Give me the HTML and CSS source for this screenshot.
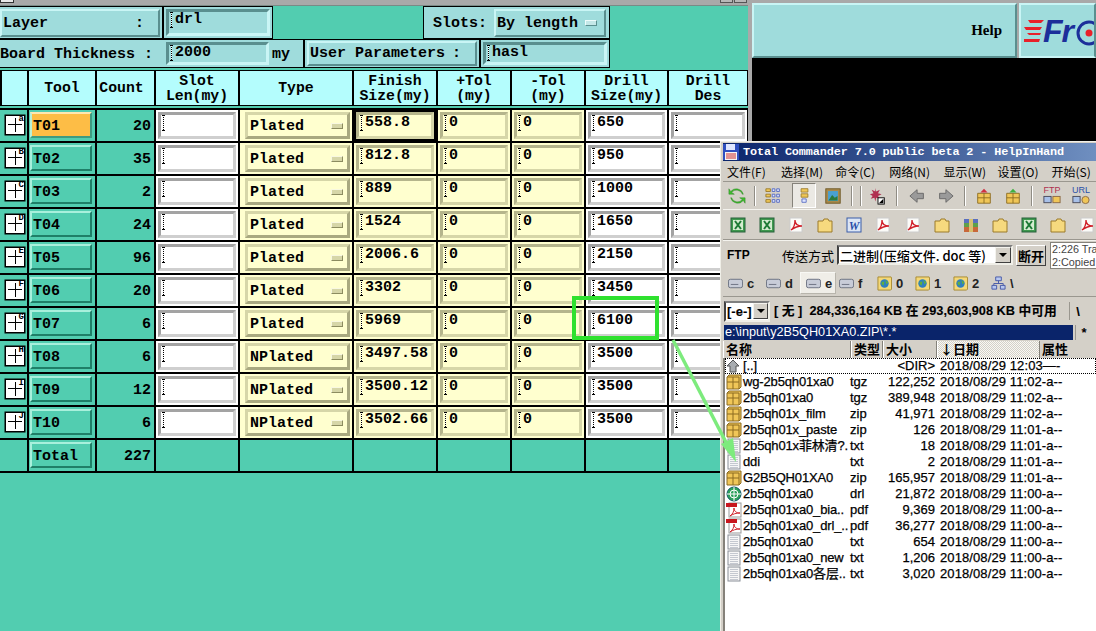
FILE: index.html
```html
<!DOCTYPE html>
<html lang="zh">
<head>
<meta charset="utf-8">
<title>Tool table</title>
<link rel="stylesheet" href="styles.css">
</head>
<body>
<svg class="defs" aria-hidden="true">
  <symbol id="xls" viewBox="0 0 16 16"><rect x="1" y="1" width="14" height="14" fill="#3f9a4f" stroke="#27613a"/><rect x="3" y="3" width="10" height="10" fill="#d5ecd0"/><path d="M5 4l6 8M11 4l-6 8" stroke="#1d7a35" stroke-width="2"/></symbol>
  <symbol id="pdf" viewBox="0 0 16 16"><rect x="2" y="1" width="12" height="14" fill="#fbfbf8" stroke="#ccc"/><path d="M3 13c3-2 4-6 4-10 0 4 2 6 7 6-4 0-7 1-11 4z" fill="none" stroke="#d0202a" stroke-width="1.3"/></symbol>
  <symbol id="fold" viewBox="0 0 16 16"><path d="M1 4h5l1-2h4l1 2h3v11H1z" fill="#f6d97e" stroke="#9b7b2a"/></symbol>
  <symbol id="doc" viewBox="0 0 16 16"><rect x="1" y="1" width="14" height="14" fill="#dce6f5" stroke="#3a5da8"/><text x="8" y="13" font-size="12" font-weight="700" font-style="italic" font-family="Liberation Serif" text-anchor="middle" fill="#2a50a8">W</text></symbol>
  <symbol id="rar" viewBox="0 0 16 16"><rect x="1" y="2" width="14" height="4" fill="#5a6fc0"/><rect x="1" y="6" width="14" height="4" fill="#5ea04a"/><rect x="1" y="10" width="14" height="5" fill="#c8683a"/><rect x="6" y="2" width="4" height="13" fill="#d8c070"/></symbol>
  <symbol id="box" viewBox="0 0 16 16"><path d="M1 3l2-2h12v12l-2 2H1z" fill="#f0c658" stroke="#8b6b20"/><path d="M7 3v12M1 8h12M1 3h12v12" fill="none" stroke="#8b6b20"/></symbol>
  <symbol id="txt" viewBox="0 0 16 16"><rect x="2" y="1" width="12" height="14" fill="#f6f6f6" stroke="#8a8f98"/><path d="M4 3.500h8M4 5.500h8M4 7.500h8M4 9.500h8M4 11.500h8M4 13.500h8" stroke="#c4c8d0"/></symbol>
  <symbol id="pf" viewBox="0 0 16 16"><rect x="3" y="1" width="12" height="14" fill="#fff" stroke="#999"/><rect x="0" y="1" width="11" height="4" fill="#c8161e"/><path d="M4 14c3-2 4-5 4-8 0 3 2 5 6 5-4 0-7 1-10 3z" fill="none" stroke="#d0202a"/></symbol>
  <symbol id="drl" viewBox="0 0 16 16"><circle cx="8" cy="8" r="7" fill="#2da05a" stroke="#156"/><circle cx="8" cy="8" r="4" fill="none" stroke="#fff"/><path d="M8 1v14M1 8h14" stroke="#fff"/></symbol>
  <symbol id="up" viewBox="0 0 16 16"><path d="M7 2l6 6h-3v6H4V8H1z" fill="#a8acb0" stroke="#555"/></symbol>
  <symbol id="hd" viewBox="0 0 16 16"><rect x="0.500" y="3.500" width="15" height="9" rx="2" fill="#c8ccd8" stroke="#6a7080"/><path d="M3 9h8" stroke="#6a7080"/></symbol>
  <symbol id="net" viewBox="0 0 16 16"><path d="M1 1h14l0.500 1v12l-1 1H1z" fill="#f4d878" stroke="#a88a30"/><circle cx="8" cy="8" r="4.500" fill="#2f7fc0"/><path d="M5 6l3 0-1 4-2-1zM9 4l3 3-2 2z" fill="#5fae3f"/></symbol>
</svg>

<div class="desk">
  <main class="app">
    <div class="topbar"><span class="sysbox"></span><span class="sysbtns"><i></i><i></i></span></div>
    <div class="row1">
      <div class="group g-layer"><div class="bevel layer"><span>Layer</span><span>:</span></div></div>
      <div class="group g-field"><div class="f tealf">drl</div></div>
      <div class="grow"></div>
      <div class="group g-slots"><span class="lab">Slots:</span><div class="bevel opt2">By length<i></i></div></div>
    </div>
    <div class="row2">
      <div class="group g-board"><span class="lab b">Board Thickness :</span><div class="f tealf thick">2000</div><span class="lab my">my</span></div>
      <div class="group g-user"><div class="bevel user"><span>User Parameters</span><span>:</span></div></div>
      <div class="group g-hasl"><div class="f tealf hasl">hasl</div></div>
    </div>

    <div class="grid head">
      <div class="h"></div><div class="h">Tool</div><div class="h h-count">Count</div><div class="h">Slot<br>Len(my)</div><div class="h">Type</div><div class="h">Finish<br>Size(my)</div><div class="h">+Tol<br>(my)</div><div class="h">-Tol<br>(my)</div><div class="h">Drill<br>Size(my)</div><div class="h">Drill<br>Des</div>
    </div>

    <div class="grid body">
      <div class="c"><div class="mk"><b>a</b></div></div><div class="c"><div class="btn on">T01</div></div><div class="c num">20</div><div class="c w"><div class="f wf"></div></div><div class="c y"><div class="opt">Plated<i></i></div></div><div class="c y cur"><div class="f yf">558.8</div></div><div class="c y"><div class="f yf">0</div></div><div class="c y"><div class="f yf">0</div></div><div class="c w"><div class="f wf">650</div></div><div class="c w"><div class="f wf"></div></div>
      <div class="c"><div class="mk"><b>B</b></div></div><div class="c"><div class="btn">T02</div></div><div class="c num">35</div><div class="c w"><div class="f wf"></div></div><div class="c y"><div class="opt">Plated<i></i></div></div><div class="c y"><div class="f yf">812.8</div></div><div class="c y"><div class="f yf">0</div></div><div class="c y"><div class="f yf">0</div></div><div class="c w"><div class="f wf">950</div></div><div class="c w"><div class="f wf"></div></div>
      <div class="c"><div class="mk"><b>C</b></div></div><div class="c"><div class="btn">T03</div></div><div class="c num">2</div><div class="c w"><div class="f wf"></div></div><div class="c y"><div class="opt">Plated<i></i></div></div><div class="c y"><div class="f yf">889</div></div><div class="c y"><div class="f yf">0</div></div><div class="c y"><div class="f yf">0</div></div><div class="c w"><div class="f wf">1000</div></div><div class="c w"><div class="f wf"></div></div>
      <div class="c"><div class="mk"><b>D</b></div></div><div class="c"><div class="btn">T04</div></div><div class="c num">24</div><div class="c w"><div class="f wf"></div></div><div class="c y"><div class="opt">Plated<i></i></div></div><div class="c y"><div class="f yf">1524</div></div><div class="c y"><div class="f yf">0</div></div><div class="c y"><div class="f yf">0</div></div><div class="c w"><div class="f wf">1650</div></div><div class="c w"><div class="f wf"></div></div>
      <div class="c"><div class="mk"><b>E</b></div></div><div class="c"><div class="btn">T05</div></div><div class="c num">96</div><div class="c w"><div class="f wf"></div></div><div class="c y"><div class="opt">Plated<i></i></div></div><div class="c y"><div class="f yf">2006.6</div></div><div class="c y"><div class="f yf">0</div></div><div class="c y"><div class="f yf">0</div></div><div class="c w"><div class="f wf">2150</div></div><div class="c w"><div class="f wf"></div></div>
      <div class="c"><div class="mk"><b>F</b></div></div><div class="c"><div class="btn">T06</div></div><div class="c num">20</div><div class="c w"><div class="f wf"></div></div><div class="c y"><div class="opt">Plated<i></i></div></div><div class="c y"><div class="f yf">3302</div></div><div class="c y"><div class="f yf">0</div></div><div class="c y"><div class="f yf">0</div></div><div class="c w"><div class="f wf">3450</div></div><div class="c w"><div class="f wf"></div></div>
      <div class="c"><div class="mk"><b>G</b></div></div><div class="c"><div class="btn">T07</div></div><div class="c num">6</div><div class="c w"><div class="f wf"></div></div><div class="c y"><div class="opt">Plated<i></i></div></div><div class="c y"><div class="f yf">5969</div></div><div class="c y"><div class="f yf">0</div></div><div class="c y"><div class="f yf">0</div></div><div class="c w"><div class="f wf">6100</div></div><div class="c w"><div class="f wf"></div></div>
      <div class="c"><div class="mk"><b>H</b></div></div><div class="c"><div class="btn">T08</div></div><div class="c num">6</div><div class="c w"><div class="f wf"></div></div><div class="c y"><div class="opt">NPlated<i></i></div></div><div class="c y"><div class="f yf">3497.58</div></div><div class="c y"><div class="f yf">0</div></div><div class="c y"><div class="f yf">0</div></div><div class="c w"><div class="f wf">3500</div></div><div class="c w"><div class="f wf"></div></div>
      <div class="c"><div class="mk"><b>I</b></div></div><div class="c"><div class="btn">T09</div></div><div class="c num">12</div><div class="c w"><div class="f wf"></div></div><div class="c y"><div class="opt">NPlated<i></i></div></div><div class="c y"><div class="f yf">3500.12</div></div><div class="c y"><div class="f yf">0</div></div><div class="c y"><div class="f yf">0</div></div><div class="c w"><div class="f wf">3500</div></div><div class="c w"><div class="f wf"></div></div>
      <div class="c"><div class="mk"><b>J</b></div></div><div class="c"><div class="btn">T10</div></div><div class="c num">6</div><div class="c w"><div class="f wf"></div></div><div class="c y"><div class="opt">NPlated<i></i></div></div><div class="c y"><div class="f yf">3502.66</div></div><div class="c y"><div class="f yf">0</div></div><div class="c y"><div class="f yf">0</div></div><div class="c w"><div class="f wf">3500</div></div><div class="c w"><div class="f wf"></div></div>
      <div class="c"></div><div class="c"><div class="btn">Total</div></div><div class="c num">227</div><div class="c"></div><div class="c"></div><div class="c"></div><div class="c"></div><div class="c"></div><div class="c"></div><div class="c"></div>
    </div>
  </main>

  <aside class="side">
    <div class="sidetop">
      <div class="helpbar">Help</div>
      <div class="logo">
        <svg class="stripes" viewBox="0 0 20 24"><path d="M4 1h16l-3 3H6zM0 8h18l-2 3H2zM3 14h14l-1 2H5zM0 20h16l-1 3H0z" fill="#e8202a"/></svg>
        <span class="fr">Fr</span>
        <svg class="ro" viewBox="0 0 26 26"><circle cx="13" cy="13" r="11" fill="none" stroke="#1c2f9a" stroke-width="3"/><circle cx="13" cy="13" r="3.500" fill="#e8202a"/></svg>
      </div>
    </div>
    <div class="blackarea"></div>
  </aside>

  <section class="tc">
    <div class="title"><svg class="floppy" viewBox="0 0 16 16"><rect x="0" y="0" width="16" height="16" fill="#2f4fc0"/><rect x="3" y="0" width="9" height="6" fill="#dfe6ff"/><rect x="2" y="8" width="12" height="8" fill="#f4f4f4"/><path d="M3 10h10M3 12h10M3 14h10" stroke="#d03030"/></svg><span class="ttext">Total Commander 7.0 public beta 2 - HelpInHand</span></div>
    <div class="menu"><span>文件(F)</span><span>选择(M)</span><span>命令(C)</span><span>网络(N)</span><span>显示(W)</span><span>设置(O)</span><span>开始(S)</span></div>

    <div class="tb1">
      <svg class="ti t-ref" viewBox="0 0 20 20"><path d="M16 8A7 7 0 0 0 4 6l3 2H1V2l2 3a8 8 0 0 1 14 3zM4 12a7 7 0 0 0 12 2l-3-2h6v6l-2-3A8 8 0 0 1 3 12z" fill="#3fc02f" stroke="#287a20" stroke-width=".5"/></svg>
      <i class="sp t-s1"></i>
      <svg class="ti t-grid" viewBox="0 0 20 20"><path d="M1 2h5v3H1zM1 8h5v3H1zM1 14h5v3H1z" fill="#f0c858" stroke="#9b7b2a"/><path d="M8 2h3v3H8zM13 2h3v3h-3zM8 8h3v3H8zM13 8h3v3h-3zM8 14h3v3H8zM13 14h3v3h-3z" fill="#dfe6ff" stroke="#5468c0"/></svg>
      <span class="press t-p"><svg class="ti2" viewBox="0 0 12 20"><path d="M2 2h8v4H2zM2 8h8v4H2z" fill="#f0c858" stroke="#9b7b2a"/><path d="M3 14h5v4H3z" fill="#dfe6ff" stroke="#5468c0"/></svg></span>
      <svg class="ti t-img" viewBox="0 0 20 20"><rect x="2" y="2" width="16" height="16" fill="#a8894a" stroke="#6b5520"/><rect x="4.500" y="4.500" width="11" height="11" fill="#4aa0d0"/><path d="M5 15l4-6 3 3 3-2v5z" fill="#2c7a3c"/></svg>
      <i class="sp t-s2"></i><i class="sp t-s3"></i>
      <svg class="ti t-star" viewBox="0 0 20 20"><path d="M7 1l1 4 4-2-2 4 4 1-4 2 2 3-4-1-1 4-1-4-4 1 2-3-3-2 4-1-2-4 4 2z" fill="#b03050"/><rect x="10" y="12" width="7" height="7" fill="#fff" stroke="#000"/><path d="M11 18l5-5v5z"/></svg>
      <i class="sp t-s4"></i>
      <svg class="ti t-l" viewBox="0 0 20 20"><path d="M1 10l8-7v4h7v6H9v4z" fill="#9a9a9a" stroke="#666"/></svg>
      <svg class="ti t-r" viewBox="0 0 20 20"><path d="M19 10l-8-7v4H4v6h7v4z" fill="#9a9a9a" stroke="#666"/></svg>
      <i class="sp t-s5"></i>
      <svg class="ti t-pk1" viewBox="0 0 20 20"><path d="M3 7h14v11H3z" fill="#f0c658" stroke="#8b6b20"/><path d="M10 7v11M3 12h14" stroke="#8b6b20"/><path d="M6 6l4-4 4 4z" fill="#d03040"/></svg>
      <svg class="ti t-pk2" viewBox="0 0 20 20"><path d="M3 7h14v11H3z" fill="#f0c658" stroke="#8b6b20"/><path d="M10 7v11M3 12h14" stroke="#8b6b20"/><path d="M6 6l4-4 4 4z" fill="#40b040"/></svg>
      <i class="sp t-s6"></i>
      <span class="txtic t-ftp">FTP<svg viewBox="0 0 20 10"><rect x="1" y="1" width="8" height="7" fill="#a8c0e8" stroke="#445"/><rect x="11" y="1" width="8" height="7" fill="#f0c658" stroke="#864"/></svg></span>
      <span class="txtic t-url">URL<svg viewBox="0 0 20 10"><rect x="1" y="1" width="8" height="7" fill="#a8c0e8" stroke="#445"/><circle cx="15" cy="5" r="4" fill="#f0c658" stroke="#864"/></svg></span>
    </div>

    <div class="tb2">
      <svg class="fi"><use href="#xls"/></svg><svg class="fi"><use href="#xls"/></svg><svg class="fi"><use href="#pdf"/></svg><svg class="fi"><use href="#fold"/></svg><svg class="fi"><use href="#doc"/></svg><svg class="fi"><use href="#pdf"/></svg><svg class="fi"><use href="#pdf"/></svg><svg class="fi"><use href="#fold"/></svg><svg class="fi"><use href="#rar"/></svg><svg class="fi"><use href="#fold"/></svg><svg class="fi"><use href="#xls"/></svg><svg class="fi"><use href="#fold"/></svg><svg class="fi"><use href="#pdf"/></svg>
    </div>

    <div class="ftp">
      <span class="ftpl">FTP</span><span class="mode">传送方式</span>
      <div class="sel modesel"><span>二进制(压缩文件. doc 等)</span><i class="arr"></i></div>
      <div class="dis">断开</div>
      <div class="log">2:226 Tra<br>2:Copied</div>
    </div>

    <div class="drives">
      <span class="dr"><svg class="di"><use href="#hd"/></svg>c</span>
      <span class="dr"><svg class="di"><use href="#hd"/></svg>d</span>
      <span class="dr dron"><svg class="di"><use href="#hd"/></svg>e</span>
      <span class="dr"><svg class="di"><use href="#hd"/></svg>f</span>
      <span class="dr"><svg class="di"><use href="#net"/></svg>0</span>
      <span class="dr"><svg class="di"><use href="#net"/></svg>1</span>
      <span class="dr"><svg class="di"><use href="#net"/></svg>2</span>
      <span class="dr"><svg class="di" viewBox="0 0 16 16"><path d="M5 1h6v4H5zM1 10h5v4H1zM10 10h5v4h-5z" fill="#b8c8f0" stroke="#4458a8"/><path d="M8 5v3M3 10V8h10v2" stroke="#4458a8" fill="none"/></svg>\</span>
    </div>

    <div class="pathbar">
      <div class="sel drvsel"><span>[-e-]</span><i class="arr"></i></div>
      <span class="free">[ 无 ]&nbsp; 284,336,164 KB 在 293,603,908 KB 中可用</span>
      <span class="slash">\</span>
    </div>
    <div class="curpath"><span class="navy">e:\input\y2B5QH01XA0.ZIP\*.*</span><span class="slash star">*</span></div>

    <div class="lh"><span class="l1">名称</span><span class="l2">类型</span><span class="l3">大小</span><span class="l4">↓日期</span><span class="l5">属性</span></div>
    <div class="list">
      <div class="r focus"><svg><use href="#up"/></svg><span class="n">[..]</span><span class="e"></span><span class="s">&lt;DIR&gt;</span><span class="d">2018/08/29 12:03—-</span></div>
      <div class="r"><svg><use href="#box"/></svg><span class="n">wg-2b5qh01xa0</span><span class="e">tgz</span><span class="s">122,252</span><span class="d">2018/08/29 11:02-a--</span></div>
      <div class="r"><svg><use href="#box"/></svg><span class="n">2b5qh01xa0</span><span class="e">tgz</span><span class="s">389,948</span><span class="d">2018/08/29 11:02-a--</span></div>
      <div class="r"><svg><use href="#box"/></svg><span class="n">2b5qh01x_film</span><span class="e">zip</span><span class="s">41,971</span><span class="d">2018/08/29 11:02-a--</span></div>
      <div class="r"><svg><use href="#box"/></svg><span class="n">2b5qh01x_paste</span><span class="e">zip</span><span class="s">126</span><span class="d">2018/08/29 11:01-a--</span></div>
      <div class="r"><svg><use href="#txt"/></svg><span class="n">2b5qh01x菲林清?.</span><span class="e">txt</span><span class="s">18</span><span class="d">2018/08/29 11:01-a--</span></div>
      <div class="r"><svg><use href="#txt"/></svg><span class="n">ddi</span><span class="e">txt</span><span class="s">2</span><span class="d">2018/08/29 11:01-a--</span></div>
      <div class="r"><svg><use href="#box"/></svg><span class="n">G2B5QH01XA0</span><span class="e">zip</span><span class="s">165,957</span><span class="d">2018/08/29 11:01-a--</span></div>
      <div class="r"><svg><use href="#drl"/></svg><span class="n">2b5qh01xa0</span><span class="e">drl</span><span class="s">21,872</span><span class="d">2018/08/29 11:00-a--</span></div>
      <div class="r"><svg><use href="#pf"/></svg><span class="n">2b5qh01xa0_bia..</span><span class="e">pdf</span><span class="s">9,369</span><span class="d">2018/08/29 11:00-a--</span></div>
      <div class="r"><svg><use href="#pf"/></svg><span class="n">2b5qh01xa0_drl_..</span><span class="e">pdf</span><span class="s">36,277</span><span class="d">2018/08/29 11:00-a--</span></div>
      <div class="r"><svg><use href="#txt"/></svg><span class="n">2b5qh01xa0</span><span class="e">txt</span><span class="s">654</span><span class="d">2018/08/29 11:00-a--</span></div>
      <div class="r"><svg><use href="#txt"/></svg><span class="n">2b5qh01xa0_new</span><span class="e">txt</span><span class="s">1,206</span><span class="d">2018/08/29 11:00-a--</span></div>
      <div class="r"><svg><use href="#txt"/></svg><span class="n">2b5qh01xa0各层..</span><span class="e">txt</span><span class="s">3,020</span><span class="d">2018/08/29 11:00-a--</span></div>
    </div>
  </section>

  <svg class="annot" viewBox="0 0 1096 631" aria-hidden="true">
    <rect x="574" y="298" width="83" height="40" fill="none" stroke="#2fe12f" stroke-width="4"/>
    <path d="M673 340L730 450" stroke="#7deb7d" stroke-width="3.500" fill="none"/>
    <path d="M736 462L721 444L733 438z" fill="#7deb7d"/>
  </svg>
</div>
</body>
</html>
```
FILE: styles.css
```css
* { box-sizing: border-box; }
html, body { margin: 0; padding: 0; }
body { width: 1096px; height: 631px; overflow: hidden; background: #52cdb0; font-family: "Liberation Mono", monospace; color: #000; }
.defs { position: absolute; width: 0; height: 0; }
.desk { position: relative; width: 1096px; height: 631px; display: flex; overflow: hidden; }

/* main app */
.app { width: 748px; height: 631px; background: #52cdb0; font: 700 15px/1 "Liberation Mono", monospace; flex: none; }
.topbar { height: 6px; background: #a9a9a9; border-bottom: 1px solid #7a8a86; display: flex; justify-content: space-between; }
.sysbox { width: 14px; height: 3px; background: #e8e8e8; border: 1px solid #333; border-top: 0; }
.sysbtns { display: flex; gap: 1px; margin-right: 1px; }
.sysbtns i { width: 13px; height: 3px; background: #b8b8b8; border: 1px solid #555; border-top: 0; }
.row1 { display: flex; height: 33px; }
.row2 { display: flex; height: 29px; }
.grow { flex: 1; }
.group { background: #9fdcdc; border: 1px solid #000; display: flex; align-items: center; }
.g-layer { width: 163px; padding: 2px 2px 1px 0; border-left: 0; }
.g-field { width: 110px; padding: 2px; }
.g-slots { width: 187px; margin-right: 138px; padding: 2px 3px 1px 9px; gap: 7px; }
.g-board { width: 304px; padding: 2px 0 2px 0; border-left: 0; }
.g-user { width: 176px; padding: 1px 2px; }
.g-hasl { width: 130px; padding: 2px; }
.lab { white-space: nowrap; }
.b { width: 166px; padding-top: 1px; }
.my { margin-left: 3px; padding-top: 2px; }
.bevel { display: flex; align-items: center; height: 100%; background: #9fdcdc; border: 2px solid; border-color: #c9f5f5 #5a8f8f #5a8f8f #c9f5f5; }
.layer { width: 100%; justify-content: space-between; padding: 0 14px 0 1px; }
.user { width: 100%; justify-content: space-between; padding: 0 14px 0 1px; }
.opt2 { flex: 1; padding-left: 1px; gap: 7px; }
.opt2 i, .opt i { display: inline-block; width: 12px; height: 6px; background: #c4e8e8; border: 1px solid; border-color: #eefcfc #5a8f8f #5a8f8f #eefcfc; }

/* text field */
.f { position: relative; height: 100%; border: 3px solid; padding: 0 0 0 6px; font: 700 15px/15px "Liberation Mono", monospace; }
.f::before { content: ""; position: absolute; left: 1px; top: 0; width: 3px; height: 16px;
  background:
    linear-gradient(#000,#000) left top/3px 1px no-repeat,
    linear-gradient(#000,#000) left bottom/3px 1px no-repeat,
    repeating-linear-gradient(#000 0 1px, #fff 1px 2px) center/1px 100% no-repeat; }
.tealf { width: 100%; background: #9fdcdc; border-color: #5a8f8f #c9f5f5 #c9f5f5 #5a8f8f; }
.thick { width: 103px; flex: none; }
.wf { background: #fff; border-color: #a3a3a3 #cfcfcf #cfcfcf #a3a3a3; }
.yf { background: #ffffcf; border-color: #b5b58c #d6d6a8 #d6d6a8 #b5b58c; }

/* grid */
.grid { display: grid; width: 748px; grid-template-columns: 27px 66px 57px 82px 112px 82px 72px 72px 81px 78px; gap: 2px; background: #000; }
.head { margin-top: 2px; padding: 1px 0 1px 2px; grid-template-columns: 25px 66px 57px 82px 112px 82px 72px 72px 81px 78px; grid-auto-rows: 34px; }
.h { background: #b4fdfd; display: flex; align-items: center; justify-content: center; text-align: center; padding-top: 2px; font: 700 14.8px/15.500px "Liberation Mono", monospace; }
.h-count { padding-right: 8px; }
.body { margin-top: 2px; padding: 2px 0; grid-auto-rows: 31px; }
.c { background: #52cdb0; display: flex; align-items: stretch; min-width: 0; }
.c.w { background: #fff; padding: 2px; }
.c.y { background: #ffffcf; padding: 2px; }
.c.w .f, .c.y .f { width: 100%; }
.c.cur { padding: 0; border: 2px solid #000; }
.num { justify-content: flex-end; align-items: center; padding: 2px 3px 0 0; }
.mk { position: relative; width: 20px; height: 20px; margin: 5px 0 0 5px; background: #fff; border: 1px solid #000; overflow: hidden; box-shadow: 0 0 0 .5px #000; }
.mk::before { content: ""; position: absolute; left: 2px; top: 8px; width: 14px; height: 1px; background: #000; }
.mk::after { content: ""; position: absolute; left: 9px; top: 2px; width: 1px; height: 14px; background: #000; }
.mk b { position: absolute; right: 0; top: -1px; font: 700 9px/8px "Liberation Mono", monospace; background: #fff; }
.btn { margin: 2px 3px 3px 1px; flex: 1; display: flex; align-items: center; padding: 3px 0 0 1px; border: 2px solid; border-color: #a8f0dc #1f7f68 #1f7f68 #a8f0dc; }
.btn.on { background: #fdbd46; border-color: #ffe7b0 #3f9a80 #3f9a80 #b8f0d8; }
.opt { flex: 1; display: flex; align-items: center; justify-content: space-between; margin-left: 3px; padding: 1px 4px 0 2px; background: #ffffcf; border: 3px solid; border-color: #d6d6a8 #a9a980 #a9a980 #d6d6a8; }
.opt i { background: #d6d6a8; border-color: #f8f8e0 #8c8c60 #8c8c60 #f8f8e0; }

/* right side */
.side { width: 348px; flex: none; margin-left: 0; border-left: 4px solid #a9a9a9; background: #000; display: flex; flex-direction: column; height: 141px; }
.sidetop { display: flex; height: 58px; background: #a9a9a9; padding-top: 3px; gap: 2px; }
.helpbar { width: 265px; display: flex; align-items: center; justify-content: flex-end; padding-right: 13px; background: #9fdcdc; border: 2px solid; border-color: #c9f5f5 #5a8f8f #5a8f8f #c9f5f5; font: 700 15px/1 "Liberation Serif", serif; }
.logo { flex: 1; display: flex; align-items: center; background: #9fdcdc; border: 2px solid; border-color: #c9f5f5 #5a8f8f #c9f5f5 #c9f5f5; padding-left: 3px; overflow: hidden; }
.stripes { width: 20px; height: 24px; flex: none; }
.fr { font: italic 700 32px/1 "Liberation Sans", sans-serif; color: #1c2f9a; margin-left: -1px; letter-spacing: -1px; }
.ro { width: 26px; height: 26px; flex: none; margin: 4px 0 0 3px; }
.blackarea { flex: 1; background: #000; }

/* Total Commander window */
.tc { position: absolute; left: 720px; top: 141px; width: 376px; height: 490px; background: #d4d0c8; padding: 1px 0 0 2px; border-left: 1px solid #f0efe8; border-top: 1px solid #f0efe8; font: 13px/1 "Liberation Sans", "Noto Sans CJK SC", sans-serif; display: flex; flex-direction: column; }
.title { height: 18px; flex: none; display: flex; align-items: center; gap: 4px; background: linear-gradient(90deg, #0a246a, #6f8fc0); color: #fff; font: 700 11.800px/1 "Liberation Mono", monospace; letter-spacing: -.1px; }
.ttext { padding-top: 2px; }
.floppy { width: 16px; height: 16px; flex: none; }
.menu { height: 21px; flex: none; display: flex; align-items: center; padding: 1px 0 0 4px; border-bottom: 1px solid #9a978f; font: 12px/1 "Noto Sans CJK SC", sans-serif; }
.menu span { width: 54.100px; flex: none; white-space: nowrap; }
.tb1 { height: 28px; flex: none; display: flex; align-items: center; border-bottom: 1px solid #f4f3ee; overflow: hidden; }
.ti { width: 18px; height: 18px; flex: none; }
.sp { width: 2px; height: 20px; flex: none; border-left: 1px solid #8f8c84; border-right: 1px solid #fff; }
.t-ref { margin-left: 5px; }
.t-s1 { margin-left: 8px; }
.t-grid { margin-left: 9px; }
.press { width: 24px; height: 25px; flex: none; margin-left: 9px; display: flex; align-items: center; justify-content: center; background: #ebe9e4; border: 1px solid; border-color: #85827a #fff #fff #85827a; }
.ti2 { width: 11px; height: 17px; }
.t-img { margin-left: 8px; }
.t-s2 { margin-left: 9px; }
.t-s3 { margin-left: 7px; }
.t-star { margin-left: 7px; }
.t-s4 { margin-left: 9px; }
.t-l { margin-left: 11px; }
.t-r { margin-left: 9px; }
.t-s5 { margin-left: 10px; }
.t-pk1 { margin-left: 9px; }
.t-pk2 { margin-left: 11px; }
.t-s6 { margin-left: 9px; }
.txtic { flex: none; width: 18px; display: block; font: 9px/9px "Liberation Sans", sans-serif; color: #b03050; text-align: center; }
.txtic svg { display: block; width: 18px; height: 10px; }
.t-ftp { margin-left: 10px; }
.t-url { margin-left: 11px; color: #2a50a8; }
.tb2 { height: 30px; flex: none; display: flex; align-items: center; padding-left: 7px; gap: 13.100px; border-bottom: 1px solid #9a978f; box-shadow: 0 1px 0 #f4f3ee; overflow: hidden; }
.fi { width: 16px; height: 16px; flex: none; }
.ftp { height: 30px; flex: none; display: flex; align-items: center; padding-left: 4px; font: 13px/1 "Noto Sans CJK SC", "Liberation Sans", sans-serif; overflow: hidden; }
.ftpl { width: 55px; flex: none; font: 700 12px/1 "Liberation Sans", sans-serif; }
.mode { width: 55px; flex: none; white-space: nowrap; }
.sel { display: flex; align-items: center; justify-content: space-between; background: #fff; border: 2px solid; border-color: #808080 #f0efe8 #f0efe8 #404040; white-space: nowrap; }
.modesel { width: 176px; height: 20px; flex: none; padding-left: 1px; font-size: 13px; font-weight: 500; }
.arr { position: relative; display: block; width: 16px; height: 16px; flex: none; background: #d4d0c8; border: 1px solid; border-color: #f4f3ee #404040 #404040 #f4f3ee; }
.arr::after { content: ""; position: absolute; left: 3px; top: 5px; border: 4px solid transparent; border-top: 4px solid #000; border-bottom: 0; }
.dis { width: 30px; height: 21px; flex: none; margin-left: 3px; display: flex; align-items: center; justify-content: center; font-size: 13px; font-weight: 700; border: 1px solid; border-color: #fff #404040 #404040 #fff; }
.log { margin-left: 4px; flex: none; width: 60px; height: 27px; background: #fff; border: 1px solid #85827a; padding: 0 0 0 1px; font: 10.800px/13px "Liberation Sans", sans-serif; color: #444; white-space: nowrap; }
.drives { height: 27px; flex: none; display: flex; align-items: center; padding-left: 5px; border-bottom: 1px solid #9a978f; font: 700 13px/1 "Liberation Sans", sans-serif; }
.dr { display: flex; align-items: center; gap: 4px; width: 38px; flex: none; color: #222; }
.di { width: 15px; height: 15px; flex: none; }
.dron { width: 36px; height: 22px; margin: 0 3px 0 -4px; padding-left: 5px; background: #f0eee8; border: 1px solid; border-color: #f8f8f4 #b8b5ac #b8b5ac #f8f8f4; }
.pathbar { height: 26px; flex: none; margin: 1px 0 1px; display: flex; align-items: center; padding-left: 1px; font: 700 13px/1 "Liberation Sans", "Noto Sans CJK SC", sans-serif; -webkit-text-stroke: .1px #000; }
.drvsel { width: 46px; height: 21px; flex: none; font-size: 13px; padding-left: 1px; }
.drvsel .arr { width: 15px; }
.free { margin-left: 4px; width: 295px; flex: none; white-space: nowrap; font-size: 12.750px; }
.slash { width: 17px; height: 18px; flex: none; display: flex; align-items: center; justify-content: center; border-left: 1px solid #9a978f; font-weight: 700; }
.curpath { height: 15px; flex: none; display: flex; align-items: center; }
.navy { width: 349px; flex: none; margin-left: 1px; height: 15px; background: #0a246a; color: #fff; padding-left: 1px; font: 12.700px/15px "Liberation Sans", sans-serif; white-space: nowrap; }
.star { margin-left: 2px; height: 15px; }
.lh { height: 17px; flex: none; margin-top: 1px; display: flex; font: 700 13px/16px "Noto Sans CJK SC", sans-serif; }
.lh span { flex: none; padding-left: 2px; border-right: 1px solid #85827a; border-left: 1px solid #fff; }
.l1 { width: 128px; }
.l2 { width: 32px; }
.l3 { width: 54px; }
.l4 { width: 103px; background: repeating-conic-gradient(#d4d0c8 0 25%, #f8f8f4 0 50%) 0 0/2px 2px; }
.l5 { flex: 1 !important; width: 60px; border: 0 !important; }
.list { flex: 1; background: #fff; border-left: 2px solid #85827a; padding-top: 0; }
.r { height: 16px; display: flex; align-items: center; white-space: nowrap; font: 13px/16px "Liberation Sans", "Noto Sans CJK SC", sans-serif; -webkit-text-stroke: .25px #000; color: #000; }
.r svg { width: 16px; height: 16px; flex: none; margin-left: 1px; }
.focus { outline: 1px dotted #000; outline-offset: -1px; }
.n { width: 107px; flex: none; margin-left: 1px; letter-spacing: -.15px; }
.e { width: 26px; flex: none; }
.s { width: 59px; flex: none; text-align: right; }
.d { margin-left: 5px; flex: none; letter-spacing: .1px; }

.annot { position: absolute; left: 0; top: 0; width: 1096px; height: 631px; pointer-events: none; }
```
